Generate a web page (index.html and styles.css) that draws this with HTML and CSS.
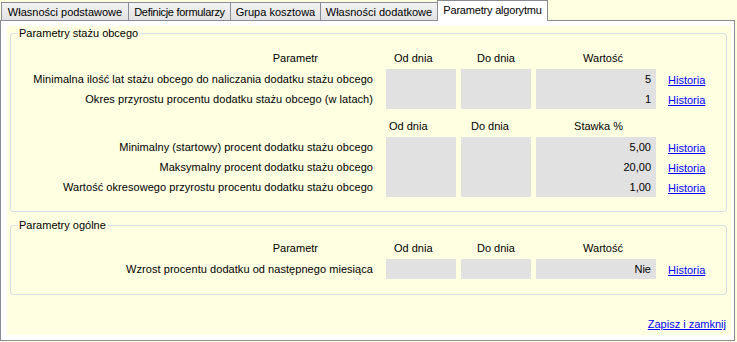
FILE: index.html
```html
<!DOCTYPE html>
<html lang="pl">
<head>
<meta charset="utf-8">
<title>Parametry algorytmu</title>
<link rel="stylesheet" href="styles.css">
</head>
<body>
<div class="tabs">
  <div class="tab tab-first tab-w1">Własności podstawowe</div>
  <div class="tab tab-w2">Definicje formularzy</div>
  <div class="tab tab-w3">Grupa kosztowa</div>
  <div class="tab tab-w4">Własności dodatkowe</div>
  <div class="tab tab-active tab-w5">Parametry algorytmu</div>
</div>
<div class="panel">
  <div class="page">
    <fieldset class="group group-staz">
      <legend>Parametry stażu obcego</legend>
      <div class="grid">
        <div class="hdr hdr-param">Parametr</div>
        <div class="hdr hdr-od">Od dnia</div>
        <div class="hdr hdr-do">Do dnia</div>
        <div class="hdr hdr-val">Wartość</div>
        <div></div>

        <div class="lbl">Minimalna ilość lat stażu obcego do naliczania dodatku stażu obcego</div>
        <div class="cell"></div>
        <div class="cell"></div>
        <div class="cell val">5</div>
        <div class="lnk"><a href="#">Historia</a></div>

        <div class="lbl">Okres przyrostu procentu dodatku stażu obcego (w latach)</div>
        <div class="cell"></div>
        <div class="cell"></div>
        <div class="cell val">1</div>
        <div class="lnk"><a href="#">Historia</a></div>
      </div>

      <div class="grid grid-second">
        <div></div>
        <div class="hdr hdr-od2">Od dnia</div>
        <div class="hdr hdr-do2">Do dnia</div>
        <div class="hdr hdr-val">Stawka %</div>
        <div></div>

        <div class="lbl">Minimalny (startowy) procent dodatku stażu obcego</div>
        <div class="cell"></div>
        <div class="cell"></div>
        <div class="cell val">5,00</div>
        <div class="lnk"><a href="#">Historia</a></div>

        <div class="lbl">Maksymalny procent dodatku stażu obcego</div>
        <div class="cell"></div>
        <div class="cell"></div>
        <div class="cell val">20,00</div>
        <div class="lnk"><a href="#">Historia</a></div>

        <div class="lbl">Wartość okresowego przyrostu procentu dodatku stażu obcego</div>
        <div class="cell"></div>
        <div class="cell"></div>
        <div class="cell val">1,00</div>
        <div class="lnk"><a href="#">Historia</a></div>
      </div>
    </fieldset>

    <fieldset class="group group-ogolne">
      <legend>Parametry ogólne</legend>
      <div class="grid">
        <div class="hdr hdr-param">Parametr</div>
        <div class="hdr hdr-od">Od dnia</div>
        <div class="hdr hdr-do">Do dnia</div>
        <div class="hdr hdr-val">Wartość</div>
        <div></div>

        <div class="lbl">Wzrost procentu dodatku od następnego miesiąca</div>
        <div class="cell"></div>
        <div class="cell"></div>
        <div class="cell val">Nie</div>
        <div class="lnk"><a href="#">Historia</a></div>
      </div>
    </fieldset>

    <div class="footer"><a href="#">Zapisz i zamknij</a></div>
  </div>
</div>
</body>
</html>
```
FILE: styles.css
```css
html, body {
  margin: 0;
  padding: 0;
}
body {
  background: #ffffe1;
  font-family: "Liberation Sans", Arial, sans-serif;
  font-size: 11px;
  color: #000;
  width: 737px;
  height: 342px;
  overflow: hidden;
}

/* Tabs */
.tabs {
  display: flex;
  align-items: flex-end;
  height: 20px;
  padding-left: 1px;
}
.tab {
  height: 18px;
  line-height: 19px;
  padding: 0;
  box-sizing: border-box;
  border: 1px solid #898c95;
  border-bottom: none;
  margin-left: -1px;
  background: linear-gradient(#f3f3f3, #e2e2e2);
  white-space: nowrap;
  text-align: center;
  overflow: hidden;
}
.tab-first {
  margin-left: 0;
}
.tab-w1 { width: 128px; }
.tab-w2 { width: 103px; letter-spacing: -0.3px; }
.tab-w3 { width: 91px; }
.tab-w4 { width: 118px; }
.tab-w5 { width: 111px; letter-spacing: -0.2px; }
.tab-active {
  height: 21px;
  line-height: 19px;
  margin-bottom: -1px;
  background: #fff;
  position: relative;
}

/* Panel */
.panel {
  width: 735px;
  height: 321px;
  box-sizing: border-box;
  border: 1px solid #898c95;
  background: #fff;
  padding: 5px 3px 5px 6px;
}
.page {
  height: 100%;
  background: #ffffe1;
  display: flex;
  flex-direction: column;
  padding: 0 4px 0 3px;
  box-sizing: border-box;
}

/* Group boxes */
.group {
  margin: 1px 0 0 0;
  padding: 9px 0 14px 0;
  border: 1px solid #d5dfe5;
  border-radius: 3px;
  min-width: 0;
}
.group legend {
  margin-left: 7px;
  padding: 0 2px 0 1px;
  line-height: 13px;
}
.group-ogolne {
  margin-top: 7px;
  padding-top: 7px;
  padding-bottom: 15px;
}

.grid {
  display: grid;
  grid-template-columns: 370px 70px 70px 120px 1fr;
  grid-auto-rows: 20px;
  column-gap: 5px;
}
.grid-second {
  margin-top: 8px;
}

.hdr {
  line-height: 18px;
  white-space: nowrap;
}
.hdr-param {
  text-align: right;
  padding-right: 63px;
}
.hdr-od { padding-left: 8px; }
.hdr-do { padding-left: 16px; }
.hdr-od2 { padding-left: 3px; }
.hdr-do2 { padding-left: 10px; }
.hdr-val {
  text-align: right;
  padding-right: 33px;
}

.lbl {
  text-align: right;
  padding-right: 8px;
  line-height: 20px;
  white-space: nowrap;
  letter-spacing: 0.05px;
}
.cell {
  background: #e1e1e1;
}
.val {
  text-align: right;
  padding-right: 5px;
  line-height: 20px;
}
.lnk {
  padding-left: 7px;
  padding-top: 1px;
  line-height: 20px;
}

a {
  color: #0000ff;
  text-decoration: underline;
}

.footer {
  margin-top: auto;
  text-align: right;
  padding: 0 1px 4px 0;
  line-height: 13px;
}
```
